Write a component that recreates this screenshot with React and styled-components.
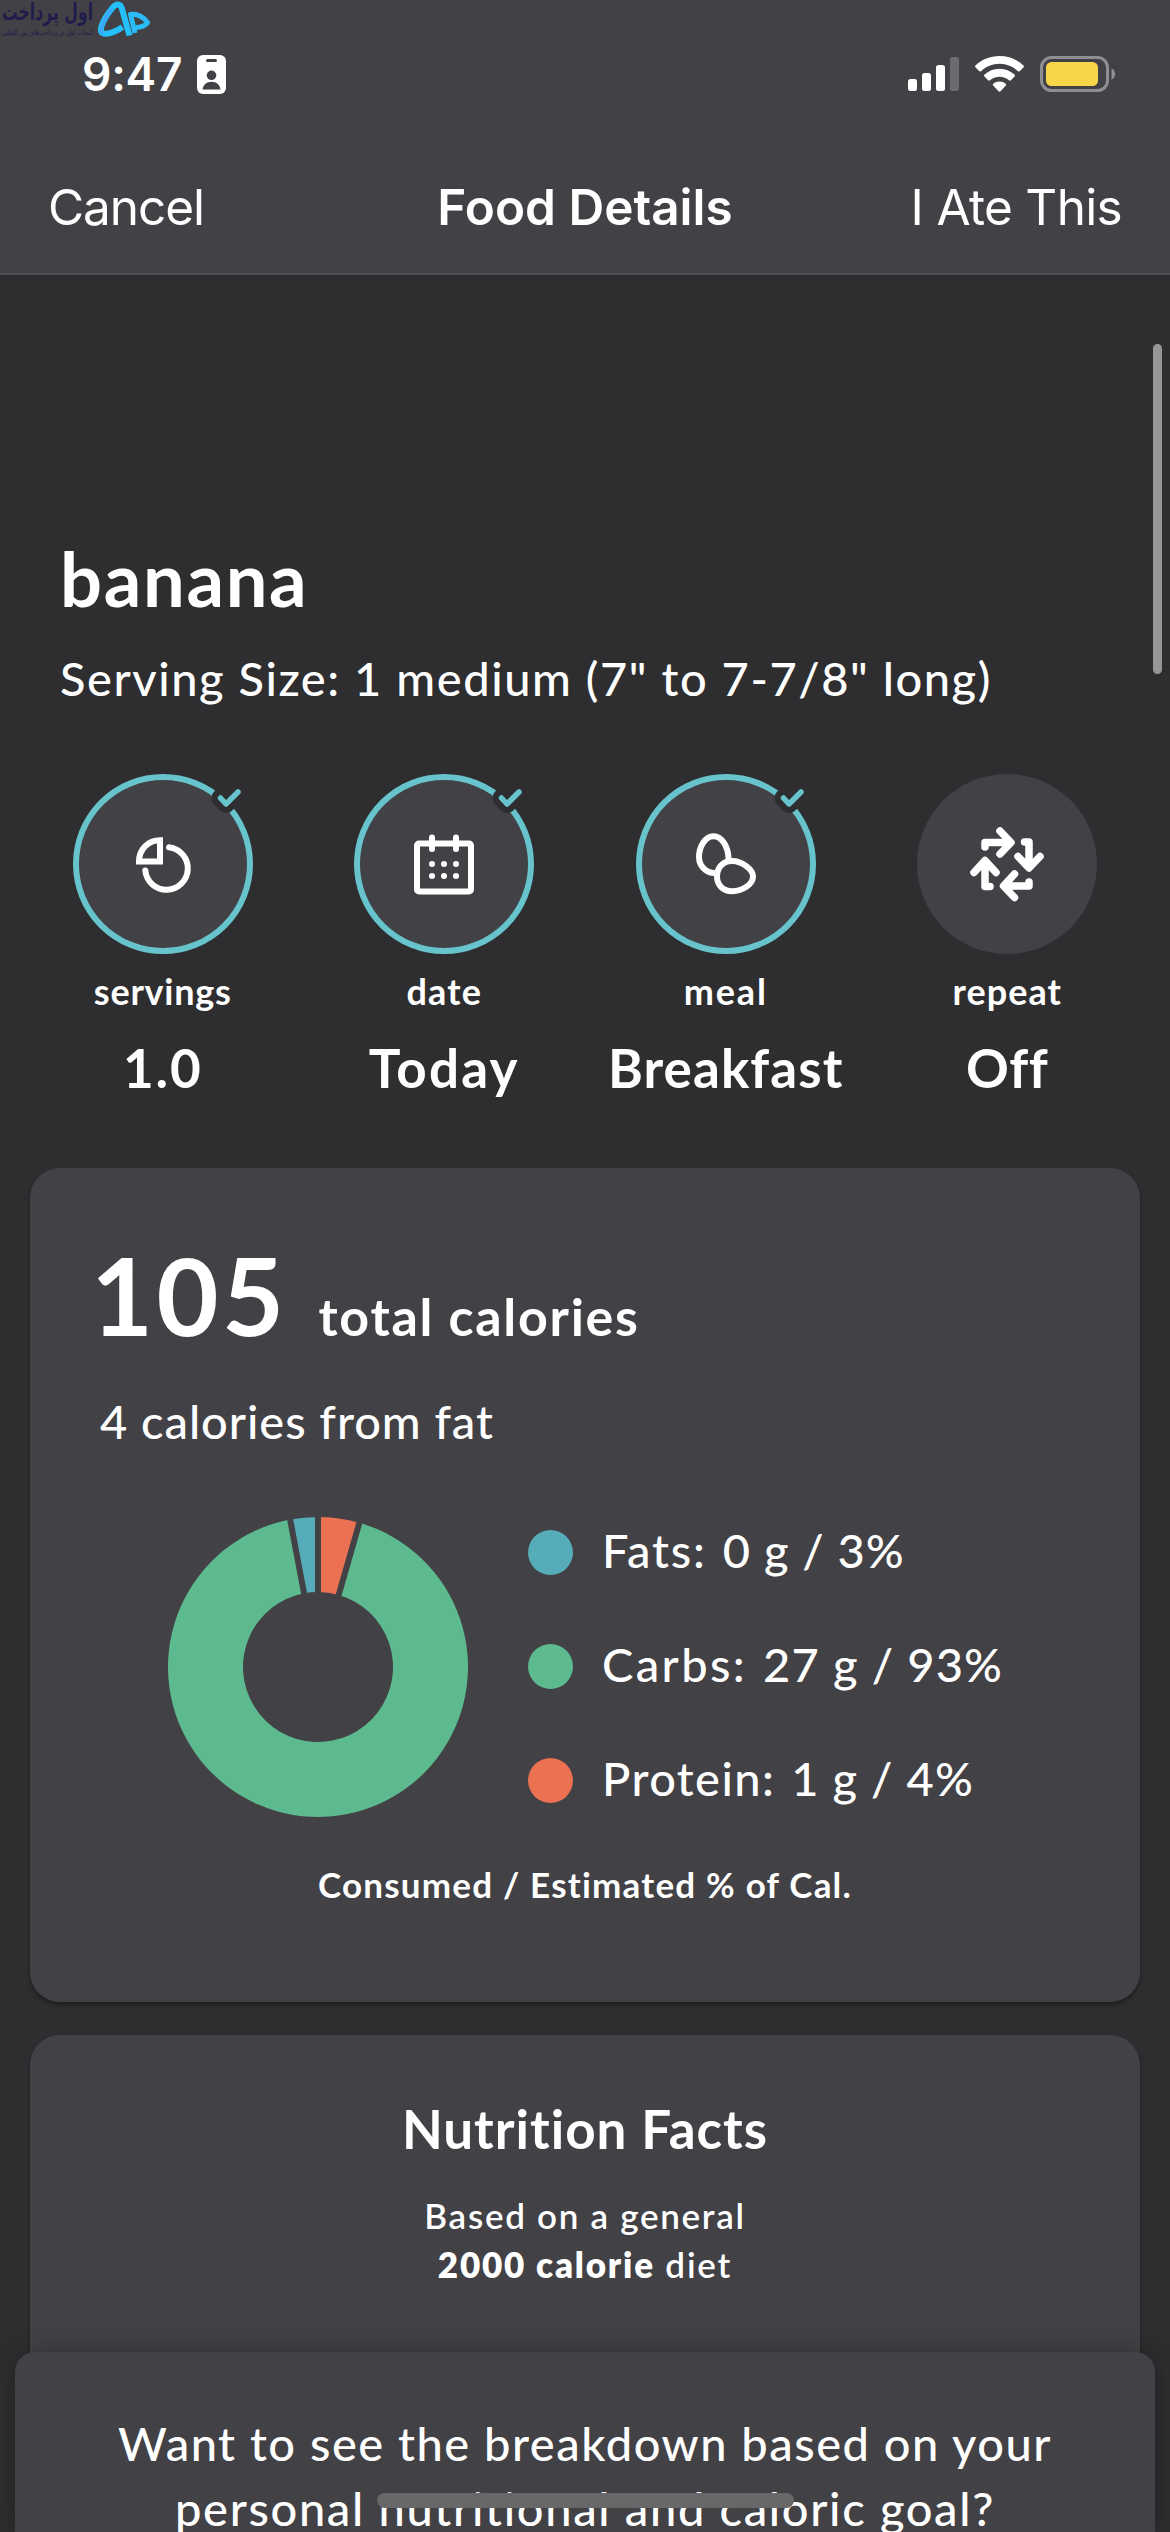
import React from 'react'
import styled, { createGlobalStyle } from 'styled-components'

const colors = {
  page: '#2e2e30',
  panel: '#424145',
  accent: '#67c3cc',
  fats: '#56acb9',
  carbs: '#5dba8e',
  protein: '#ec7052',
}

const GlobalStyle = createGlobalStyle`
  * {
    box-sizing: border-box;
  }

  body {
    margin: 0;
    background: ${colors.page};
    color: #fff;
    font-family: Lato, sans-serif;
  }
`

const Screen = styled.div`
  position: relative;
  width: 1170px;
  height: 2532px;
  overflow: hidden;
  background: ${colors.page};
`

/* keeps words on one line, tracking differs from label to label */
const Text = styled.span`
  display: block;
  white-space: nowrap;
  letter-spacing: ${props => props.$track || 0}px;
`

const Header = styled.header`
  height: 275px;
  background: ${colors.panel};
  border-bottom: 2px solid #4f4f52;
  font-family: Inter, sans-serif;
`

const Watermark = styled.svg`
  position: absolute;
  top: 0;
  left: 0;
`

const StatusBar = styled.div`
  display: flex;
  align-items: center;
  justify-content: space-between;
  padding: 49px 54px 0 82px;
`

const StatusGroup = styled.div`
  display: flex;
  align-items: center;
  height: 50px;
  gap: ${props => props.$gap}px;
`

const Time = styled(Text)`
  font-size: 46px;
  font-weight: 600;
  line-height: 50px;
`

const NavBar = styled.nav`
  display: flex;
  align-items: center;
  justify-content: space-between;
  margin-top: 78px;
  padding: 0 48px;
`

const NavButton = styled(Text)`
  flex: 1 0 0;
  font-size: 49.5px;
  line-height: 60px;
  text-align: ${props => props.$align || 'left'};
`

const NavTitle = styled(Text)`
  font-size: 49.5px;
  font-weight: 600;
  line-height: 60px;
`

const ScrollBar = styled.div`
  position: absolute;
  top: 344px;
  right: 8px;
  width: 9px;
  height: 330px;
  border-radius: 5px;
  background: #969698;
`

const Intro = styled.section`
  padding: 264px 60px 0;
`

const FoodName = styled(Text)`
  font-size: 74px;
  font-weight: 700;
  line-height: 80px;
`

const ServingSize = styled(Text)`
  margin-top: 29px;
  font-size: 47px;
  font-weight: 500;
  line-height: 60px;
`

const Options = styled.section`
  display: grid;
  grid-template-columns: repeat(4, 1fr);
  margin-top: 66px;
  padding: 0 22px;
`

const Option = styled.div`
  display: flex;
  flex-direction: column;
  align-items: center;
`

const OptionLabel = styled(Text)`
  margin-top: 15px;
  font-size: 36px;
  font-weight: 700;
  line-height: 44px;
`

const OptionValue = styled(Text)`
  margin-top: 25px;
  font-size: 53px;
  font-weight: 700;
  line-height: 60px;
`

const Card = styled.section`
  margin: ${props => props.$top}px 30px 0;
  height: ${props => props.$height}px;
  border-radius: 30px;
  background: ${colors.panel};
  box-shadow: 0 3px 4px rgba(0, 0, 0, 0.35);
`

const Calories = styled.div`
  display: flex;
  align-items: baseline;
  gap: 31px;
  padding: 71.5px 0 0 61px;
`

const CaloriesCount = styled(Text)`
  font-size: 107px;
  font-weight: 700;
  line-height: 110px;
`

const CaloriesLabel = styled(Text)`
  font-size: 52px;
  font-weight: 700;
  line-height: 60px;
`

const FatCalories = styled(Text)`
  margin: 43px 0 0 70px;
  font-size: 47px;
  font-weight: 500;
  line-height: 56px;
`

const Breakdown = styled.div`
  display: flex;
  align-items: center;
  gap: 60px;
  margin-top: 68px;
  padding-left: 138px;
`

const Legend = styled.div`
  display: flex;
  flex-direction: column;
  gap: 54px;
`

const LegendRow = styled.div`
  display: flex;
  align-items: center;
  height: 60px;
  font-size: 47px;
  font-weight: 500;
  line-height: 50px;
`

const Dot = styled.span`
  width: 45px;
  height: 45px;
  margin-right: 29px;
  border-radius: 50%;
  background: ${props => props.$color};
`

const LegendText = styled(Text)`
  padding-bottom: 5px;

  & + & {
    margin-left: ${props => props.$gap || 15}px;
  }
`

const Caption = styled(Text)`
  margin-top: 45px;
  font-size: 35px;
  font-weight: 700;
  line-height: 44px;
  text-align: center;
`

const CardTitle = styled(Text)`
  padding-top: 64px;
  font-size: 53px;
  font-weight: 700;
  line-height: 60px;
  text-align: center;
`

const CardNote = styled.div`
  margin-top: 32px;
  font-size: 35px;
  font-weight: 600;
  line-height: 49px;
  text-align: center;

  b {
    font-weight: 800;
  }
`

const Sheet = styled.section`
  position: absolute;
  left: 15px;
  right: 15px;
  bottom: 0;
  height: 180px;
  padding-top: 59px;
  border-radius: 20px 20px 0 0;
  background: ${colors.panel};
  box-shadow: 0 0 24px rgba(0, 0, 0, 0.28);
  font-size: 47px;
  font-weight: 500;
  line-height: 65px;
  text-align: center;
`

const HomeIndicator = styled.div`
  position: absolute;
  left: 377px;
  bottom: 24px;
  width: 417px;
  height: 15px;
  border-radius: 8px;
  background: #686868;
`

const Logo = () => (
  <Watermark width="152" height="40" viewBox="0 0 152 40">
    <g fill="#211c4b" fontFamily="DejaVu Sans, sans-serif" direction="rtl">
      <text x="93" y="20" fontSize="24" fontWeight="700" textLength="91" lengthAdjust="spacingAndGlyphs">
        اول پرداخت
      </text>
      <text x="93" y="35" fontSize="8" textLength="91" lengthAdjust="spacingAndGlyphs">
        انتخاب اول در پرداخت‌های بین المللی
      </text>
    </g>
    <g fill="none" strokeLinejoin="round">
      <path
        d="M122.5 27C116 31.500 109.500 34.500 103.500 33.500C97 31.500 104 18.500 111.500 9C116 3 120.500 3 122 9L129.500 35.500"
        stroke="#23c0fb"
        strokeWidth="6"
      />
      <path d="M103.500 34.200C97.500 32 104.500 18.500 111.500 9" stroke="#3fa6f8" strokeWidth="3" />
      <path
        d="M135 33L130.500 14.500C138 13.500 145 18 147.500 22.500C146.500 25.500 140 27.300 136 27.500"
        stroke="#2bbcf8"
        strokeWidth="5"
      />
    </g>
  </Watermark>
)

const BadgeIcon = () => (
  <svg width="29" height="39" viewBox="0 0 29 39">
    <rect width="29" height="39" rx="6" fill="#fff" />
    <rect x="9" y="4" width="11" height="3" rx="1.500" fill={colors.panel} />
    <circle cx="14.500" cy="20.300" r="4.800" fill={colors.panel} />
    <path d="M5.500 34.500c.6-5 4.500-7.700 9-7.700s8.400 2.700 9 7.700z" fill={colors.panel} />
  </svg>
)

const SignalIcon = () => (
  <svg width="51" height="34" viewBox="0 0 51 34" fill="#fff">
    <rect x="0" y="22" width="9" height="12" rx="2.500" />
    <rect x="14" y="16" width="9" height="18" rx="2.500" />
    <rect x="28" y="8" width="9" height="26" rx="2.500" />
    <rect x="42" y="0" width="9" height="34" rx="2.500" fill="#6c6b6f" />
  </svg>
)

const WifiIcon = () => (
  <svg width="49" height="36" viewBox="0 0 49 36" fill="#fff">
    <path d="M24.500 0C33.800 0 42.300 3.500 48.500 9.400c.6.6.6 1.300.1 1.900l-3.700 3.800c-.6.600-1.400.6-2 .1C38 10.500 31.600 7.700 24.500 7.700S11 10.500 6.100 15.200c-.6.500-1.400.5-2-.1L.4 11.300c-.5-.6-.5-1.300.1-1.900C6.700 3.500 15.200 0 24.500 0z" />
    <path d="M24.500 12.800c5.800 0 11 2.200 15 5.800.6.600.6 1.300.1 1.900l-3.700 3.700c-.6.600-1.300.6-2 .1-2.500-2.200-5.800-3.600-9.400-3.600s-6.900 1.400-9.400 3.600c-.7.500-1.400.5-2-.1l-3.700-3.700c-.5-.6-.5-1.300.1-1.900 4-3.600 9.200-5.800 15-5.800z" />
    <path d="M24.500 25.500c2.400 0 4.500.8 6.200 2.200.6.5.6 1.200.1 1.800l-5.300 5.800c-.6.600-1.400.6-2 0l-5.300-5.800c-.5-.6-.5-1.300.1-1.800 1.700-1.400 3.800-2.200 6.200-2.200z" />
  </svg>
)

const BatteryIcon = () => (
  <svg width="76" height="36" viewBox="0 0 76 36">
    <rect x="1.500" y="1.500" width="66" height="33" rx="10" fill="none" stroke="#8f8e94" strokeWidth="3" />
    <rect x="6" y="6" width="52" height="24" rx="5.500" fill="#f7d64a" />
    <path d="M71.500 12.500c2.200.9 3.600 2.900 3.600 5.500s-1.400 4.600-3.600 5.500z" fill="#8f8e94" />
  </svg>
)

/* every option icon is drawn in the 180px circle it sits in */
const OptionCircle = ({ checked, children }) => (
  <svg width="180" height="180" viewBox="0 0 180 180" overflow="visible" fill="none">
    <circle
      cx="90"
      cy="90"
      r={checked ? 87 : 90}
      fill={colors.panel}
      stroke={checked ? colors.accent : 'none'}
      strokeWidth="6"
    />
    <g stroke="#fff" strokeWidth="6" strokeLinecap="round">
      {children}
    </g>
    {checked && (
      <g strokeLinecap="round" strokeLinejoin="round">
        <path d="M147.500 24l5.500 6L165 18" stroke={colors.page} strokeWidth="18" />
        <path d="M147.500 24l5.500 6L165 18" stroke={colors.accent} strokeWidth="5.500" />
      </g>
    )}
  </svg>
)

const ServingsIcon = () => (
  <>
    <path d="M66 87.500H87V66.200C75 66.200 66 75.500 66 87.500Z" />
    <path d="M96 73.300A21.300 21.300 0 1 1 72.300 96.500" />
  </>
)

const CalendarIcon = () => (
  <>
    <rect x="63" y="69.500" width="54" height="48" rx="2" />
    <path d="M78 63.500V75M102 63.500V75" />
    <path d="M78 90h.01M90 90h.01M102 90h.01M78 102h.01M90 102h.01M102 102h.01" />
  </>
)

const EggsIcon = () => (
  <>
    <path d="M77.500 99C69 98.500 63 91 63 83C63 73 69 62.200 77.500 62.200C86 62.200 92 73 92.500 84" />
    <path d="M96 87C106 87 117 95.500 117 102.500C117 110 107 117.200 96 117.200C86.500 117.200 81 110.500 81 102.500C81 93.500 87 87 96 87Z" />
  </>
)

const RepeatIcon = () => (
  <g strokeWidth="7.500" strokeLinejoin="round">
    <path d="M68 73V68.500H92M83 57L94 68.500L83 80" />
    <path d="M107.500 68H112V92M101 82.500L112 94L123 82.500" />
    <path d="M112 108V112H88M97.500 100L86.500 112L97.500 123.500" />
    <path d="M73 112.500H68V88M57 98.500L68 86.500L79 98.500" />
  </g>
)

const RADIUS = 150

const polar = (r, deg) => {
  const a = ((deg - 90) * Math.PI) / 180
  return `${RADIUS + r * Math.cos(a)} ${RADIUS + r * Math.sin(a)}`
}

const slicePath = (from, to) => {
  const large = to - from > 180 ? 1 : 0
  return `M${polar(150, from)}A150 150 0 ${large} 1 ${polar(150, to)}L${polar(75, to)}A75 75 0 ${large} 0 ${polar(75, from)}Z`
}

const slices = [
  { from: 0, to: 16, color: colors.protein },
  { from: 16, to: 349.3, color: colors.carbs },
  { from: 349.3, to: 360, color: colors.fats },
]

const Donut = () => (
  <svg width="300" height="300" viewBox="0 0 300 300">
    {slices.map(s => (
      <path key={s.color} d={slicePath(s.from, s.to)} fill={s.color} />
    ))}
    {slices.map(s => (
      <path key={s.from} d={`M${polar(70, s.from)}L${polar(153, s.from)}`} stroke={colors.panel} strokeWidth="6" />
    ))}
  </svg>
)

const options = [
  { label: 'servings', value: '1.0', icon: ServingsIcon, checked: true, tracks: [0.75, 1.8] },
  { label: 'date', value: 'Today', icon: CalendarIcon, checked: true, tracks: [1.15, 2.2] },
  { label: 'meal', value: 'Breakfast', icon: EggsIcon, checked: true, tracks: [1.8, 1.1] },
  { label: 'repeat', value: 'Off', icon: RepeatIcon, checked: false, tracks: [1.05, 0.6] },
]

const macros = [
  { name: 'Fats:', amount: '0 g / 3%', color: colors.fats, tracks: [1.8, 1], gap: 17 },
  { name: 'Carbs:', amount: '27 g / 93%', color: colors.carbs, tracks: [2.4, 1.15], gap: 14 },
  { name: 'Protein:', amount: '1 g / 4%', color: colors.protein, tracks: [1.4, 1.1], gap: 16 },
]

const App = () => (
  <Screen>
    <GlobalStyle />
    <Header>
      <Logo />
      <StatusBar>
        <StatusGroup $gap={15}>
          <Time $track={-0.24}>9:47</Time>
          <BadgeIcon />
        </StatusGroup>
        <StatusGroup $gap={16}>
          <SignalIcon />
          <WifiIcon />
          <BatteryIcon />
        </StatusGroup>
      </StatusBar>
      <NavBar>
        <NavButton $track={-1.07}>Cancel</NavButton>
        <NavTitle>Food Details</NavTitle>
        <NavButton $align="right" $track={-0.68}>I Ate This</NavButton>
      </NavBar>
    </Header>
    <ScrollBar />

    <Intro>
      <FoodName $track={1.7}>banana</FoodName>
      <ServingSize $track={1.55}>Serving Size: 1 medium (7" to 7-7/8" long)</ServingSize>
    </Intro>

    <Options>
      {options.map(({ label, value, icon: Icon, checked, tracks }) => (
        <Option key={label}>
          <OptionCircle checked={checked}>
            <Icon />
          </OptionCircle>
          <OptionLabel $track={tracks[0]}>{label}</OptionLabel>
          <OptionValue $track={tracks[1]}>{value}</OptionValue>
        </Option>
      ))}
    </Options>

    <Card $top={70} $height={834}>
      <Calories>
        <CaloriesCount $track={3.44}>105</CaloriesCount>
        <CaloriesLabel $track={1.7}>total calories</CaloriesLabel>
      </Calories>
      <FatCalories $track={0.95}>4 calories from fat</FatCalories>
      <Breakdown>
        <Donut />
        <Legend>
          {macros.map(m => (
            <LegendRow key={m.name}>
              <Dot $color={m.color} />
              <LegendText $track={m.tracks[0]}>{m.name}</LegendText>
              <LegendText $track={m.tracks[1]} $gap={m.gap}>{m.amount}</LegendText>
            </LegendRow>
          ))}
        </Legend>
      </Breakdown>
      <Caption $track={1.2}>Consumed / Estimated % of Cal.</Caption>
    </Card>

    <Card $top={33} $height={600}>
      <CardTitle $track={0.98}>Nutrition Facts</CardTitle>
      <CardNote>
        <Text $track={1.7}>Based on a general</Text>
        <Text $track={1.8}><b>2000 calorie</b> diet</Text>
      </CardNote>
    </Card>

    <Sheet>
      <Text $track={1.5}>Want to see the breakdown based on your</Text>
      <Text $track={1.67}>personal nutritional and caloric goal?</Text>
    </Sheet>
    <HomeIndicator />
  </Screen>
)

export default App
